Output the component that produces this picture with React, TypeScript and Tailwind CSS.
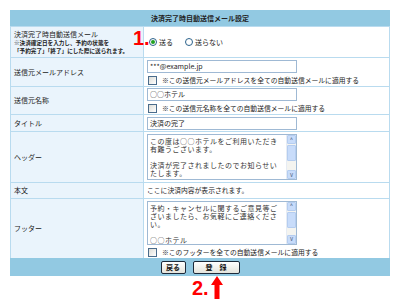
const font = { fontFamily: '"Noto Sans CJK JP", "Noto Sans", sans-serif' };

function Input({ value }: { value: string }) {
  return (
    <div className="w-[150px] h-[13px] border border-[#9fb9d4] bg-white px-[2px] text-[7px] leading-[11px] text-[#222]">
      {value}
    </div>
  );
}

function Check({ label }: { label: string }) {
  return (
    <div className="flex items-center gap-[5px] mt-[3px] pl-[1px]">
      <div className="w-[9px] h-[9px] border border-[#4a6c8c] bg-gradient-to-br from-[#dcdcd6] to-white" />
      <span className="text-[6.8px] leading-[9px] text-[#222]">{label}</span>
    </div>
  );
}

function Scrollbar() {
  return (
    <div className="flex flex-col w-[10px] h-full bg-[#f4f4f0] border-l border-[#e6ecf4]">
      <div className="h-[9px] bg-[#c8dcfa] border border-[#b5cdf0] rounded-[1px] flex items-center justify-center text-[6px] leading-none text-[#4d6185]">
        ^
      </div>
      <div className="flex-1 flex flex-col">
        <div className="h-[16px] mt-[1px] bg-[#c8dcfa] border border-[#b5cdf0] rounded-[1px]" />
      </div>
      <div className="h-[9px] bg-[#c8dcfa] border border-[#b5cdf0] rounded-[1px] flex items-center justify-center text-[6px] leading-none text-[#4d6185]">
        v
      </div>
    </div>
  );
}

function TextArea({ lines, h }: { lines: string[]; h: string }) {
  return (
    <div className={`w-[150px] ${h} border border-[#9fb9d4] bg-white flex`}>
      <div className="flex-1 overflow-hidden pl-[2px] pt-[2px] text-[7px] leading-[8px] tracking-[0.5px] text-[#333]">
        {lines.map((l, i) => (
          <div key={i} className="h-[8px] whitespace-nowrap">
            {l}
          </div>
        ))}
      </div>
      <Scrollbar />
    </div>
  );
}

function Row({
  label,
  h,
  children,
}: {
  label: React.ReactNode;
  h: string;
  children: React.ReactNode;
}) {
  return (
    <div className={`flex gap-px ${h}`}>
      <div className="w-[132px] bg-[#eaf4fc] flex items-center pl-[3px] text-[7px] text-[#222]">
        {label}
      </div>
      <div className="flex-1 bg-white flex flex-col justify-center pl-[3px]">{children}</div>
    </div>
  );
}

export default function App() {
  return (
    <div className="w-[400px] h-[300px] bg-white pt-[10px] pl-[10px] relative" style={font}>
      <div className="w-[380px] bg-[#b9dbef] px-px flex flex-col gap-px">
        <div className="h-[16px] -mx-px bg-[#92c9e2] flex items-center justify-center text-[7px] text-[#222] font-bold">
          決済完了時自動送信メール設定
        </div>
        <Row
          h="h-[30px]"
          label={
            <div className="flex flex-col">
              <span className="text-[7px] leading-[10px]">決済完了時自動送信メール</span>
              <span className="text-[5.6px] leading-[8px] font-bold">※決済確定日を入力し、予約の状態を</span>
              <span className="text-[5.6px] leading-[8px] font-bold">「予約完了」「終了」にした際に送られます。</span>
            </div>
          }
        >
          <div className="flex items-center text-[7px] text-[#222] pl-[2px]">
            <div className="w-[8px] h-[8px] rounded-full border border-[#2c628b] bg-white flex items-center justify-center">
              <div className="w-[4px] h-[4px] rounded-full bg-[#21a121]" />
            </div>
            <span className="ml-[2px]">送る</span>
            <div className="ml-[12px] w-[8px] h-[8px] rounded-full border border-[#2c628b] bg-white" />
            <span className="ml-[2px]">送らない</span>
          </div>
        </Row>
        <Row h="h-[28px]" label="送信元メールアドレス">
          <Input value="***@example.jp" />
          <Check label="※この送信元メールアドレスを全ての自動送信メールに適用する" />
        </Row>
        <Row h="h-[27px]" label="送信元名称">
          <Input value="○○ホテル" />
          <Check label="※この送信元名称を全ての自動送信メールに適用する" />
        </Row>
        <Row h="h-[16px]" label="タイトル">
          <Input value="決済の完了" />
        </Row>
        <Row h="h-[50px]" label="ヘッダー">
          <TextArea
            h="h-[46px]"
            lines={[
              "この度は○○ホテルをご利用いただき",
              "有難うございます。",
              "",
              "決済が完了されましたのでお知らせい",
              "たします。",
            ]}
          />
        </Row>
        <Row h="h-[15px]" label="本文">
          <span className="text-[6.8px] text-[#222]">ここに決済内容が表示されます。</span>
        </Row>
        <Row h="h-[59px]" label="フッター">
          <TextArea
            h="h-[44px]"
            lines={[
              "予約・キャンセルに関するご意見等ご",
              "ざいましたら、お気軽にご連絡くださ",
              "い。",
              "",
              "○○ホテル",
            ]}
          />
          <Check label="※このフッターを全ての自動送信メールに適用する" />
        </Row>
        <div className="h-[18px] -mx-px -mt-px bg-[#92c9e2] flex items-center justify-center gap-[7px]">
          <button className="h-[13px] w-[25px] rounded-[2px] border border-[#1d2a3a] bg-gradient-to-b from-white to-[#e4e4dc] text-[7px] font-bold leading-none text-[#111]">
            戻る
          </button>
          <button className="h-[13px] w-[47px] rounded-[2px] border border-[#1d2a3a] bg-gradient-to-b from-white to-[#e4e4dc] text-[7px] font-bold leading-none text-[#111]">
            登　録
          </button>
        </div>
      </div>
      <div className="absolute left-[133px] top-[28px] text-[20px] font-bold leading-none text-[#ff0000]" style={{ fontFamily: '"Liberation Sans", sans-serif' }}>
        1.
      </div>
      <div className="absolute left-[192px] top-[278px] text-[20px] font-bold leading-none text-[#ff0000]" style={{ fontFamily: '"Liberation Sans", sans-serif' }}>
        2.
      </div>
      <svg className="absolute left-[211px] top-[276px]" width="12" height="23" viewBox="0 0 12 23">
        <polygon points="6,0 12,9 8.5,9 8.5,23 3.5,23 3.5,9 0,9" fill="#ff0000" />
      </svg>
    </div>
  );
}
